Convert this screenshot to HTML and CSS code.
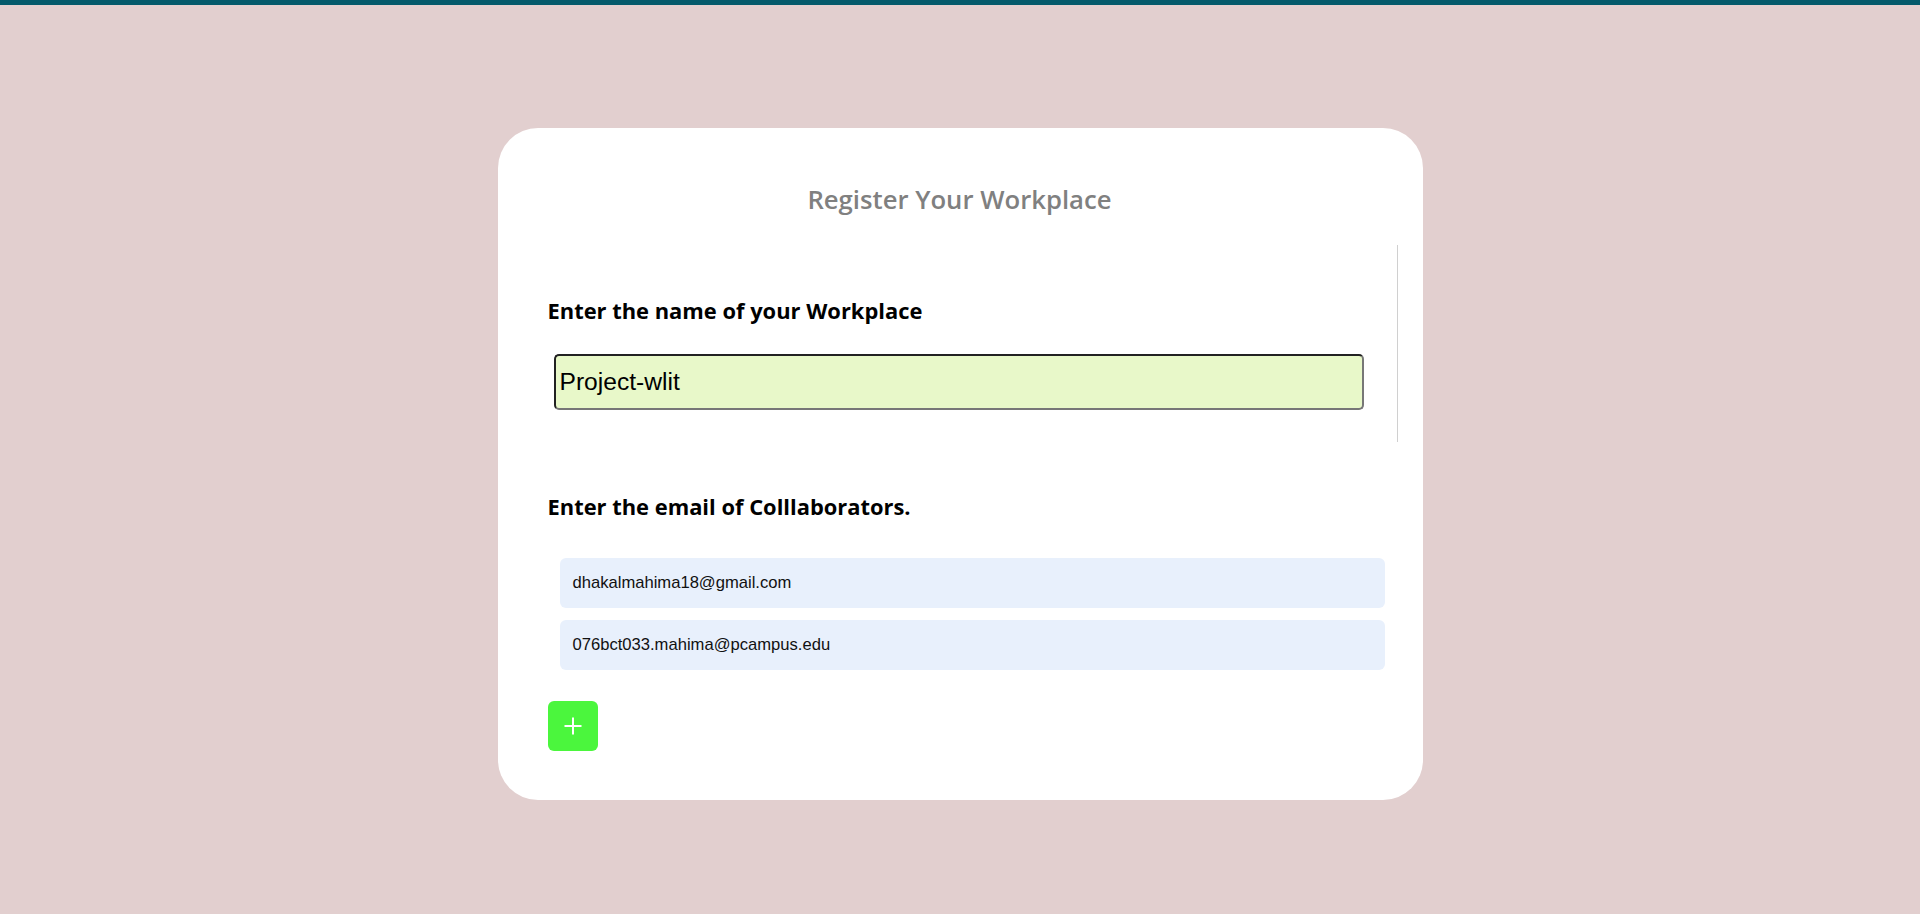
FILE: index.html
```html
<!DOCTYPE html>
<html lang="en">
<head>
<meta charset="utf-8">
<title>Register Your Workplace</title>
<link rel="stylesheet" href="styles.css">
</head>
<body>
<div class="topbar"></div>
<main class="page">
  <section class="card">
    <h2 class="title">Register Your Workplace</h2>
    <div class="name-section">
      <h3 class="label">Enter the name of your Workplace</h3>
      <input class="name-input" type="text" value="Project-wlit">
    </div>
    <div class="email-section">
      <h3 class="label">Enter the email of Colllaborators.</h3>
      <div class="email-list">
        <div class="email-row">dhakalmahima18@gmail.com</div>
        <div class="email-row">076bct033.mahima@pcampus.edu</div>
      </div>
      <button class="add-btn" type="button" aria-label="Add collaborator">
        <svg width="20" height="20" viewBox="0 0 20 20"><path d="M10 1.5V18.5M1.5 10H18.5" stroke="#fff" stroke-width="2" fill="none"/></svg>
      </button>
    </div>
  </section>
</main>
</body>
</html>
```
FILE: styles.css
```css
html, body {
  margin: 0;
  padding: 0;
}
body {
  background: #e2cfcf;
  min-height: 914px;
  font-family: "Open Sans", "Noto Sans", sans-serif;
}
.topbar {
  height: 5px;
  background: #045a6b;
}
.page {
  display: flex;
  justify-content: center;
  padding-top: 123px;
}
.card {
  box-sizing: border-box;
  width: 925px;
  background: #ffffff;
  border-radius: 40px;
  padding: 52px 25px 49px 50px;
  display: flex;
  flex-direction: column;
}
.title {
  margin: 0 0 0 -26px;
  height: 40px;
  line-height: 40px;
  text-align: center;
  font-size: 25.7px;
  font-weight: 600;
  color: #808080;
}
.name-section {
  margin-top: 25px;
  height: 197px;
  box-sizing: border-box;
  border-right: 1px solid #d0d0d0;
  padding-top: 51px;
  display: flex;
  flex-direction: column;
}
.label {
  margin: 0;
  height: 30px;
  line-height: 30px;
  font-size: 21.9px;
  font-weight: 700;
  color: #000;
}
.name-input {
  margin: 28px 0 0 6px;
  box-sizing: border-box;
  width: 810px;
  height: 56px;
  border: 2px solid;
  border-color: #222222 #777777 #777777 #222222;
  border-radius: 5px;
  background: #e8f8c9;
  font-family: "Liberation Sans", Arial, sans-serif;
  font-size: 24.6px;
  color: #000;
  padding: 0 4px;
  outline: none;
}
.email-section {
  margin-top: 50px;
  display: flex;
  flex-direction: column;
}
.email-list {
  margin: 36px 0 0 12px;
  display: flex;
  flex-direction: column;
  gap: 12px;
}
.email-row {
  width: 825px;
  height: 50px;
  box-sizing: border-box;
  padding-left: 13px;
  display: flex;
  align-items: center;
  background: #e8f0fc;
  border-radius: 6px;
  font-family: "Liberation Sans", Arial, sans-serif;
  font-size: 16.6px;
  color: #111;
}
.add-btn {
  margin-top: 31px;
  width: 50px;
  height: 50px;
  border: none;
  border-radius: 6px;
  background: #4bf63d;
  display: flex;
  align-items: center;
  justify-content: center;
  padding: 0;
  cursor: pointer;
}
```
